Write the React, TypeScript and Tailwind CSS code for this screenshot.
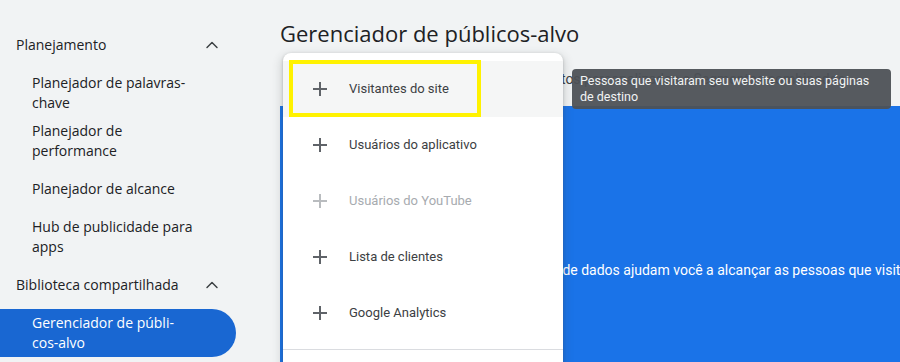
import { ChevronUp } from "lucide-react";

const sans = "font-['Open_Sans',sans-serif]";
const roboto = "font-['Roboto',sans-serif]";

function PlusIcon({ className }: { className?: string }) {
  return (
    <svg width="14" height="14" viewBox="0 0 14 14" className={className}>
      <path d="M7 0v14M0 7h14" stroke="currentColor" strokeWidth="2" fill="none" />
    </svg>
  );
}

function Section({ label }: { label: string }) {
  return (
    <div className="mr-3 flex min-h-12 items-center justify-between py-1 pl-4 pr-[14px] text-[14px] leading-5 text-[#202124]">
      <span>{label}</span>
      <ChevronUp size={20} strokeWidth={1.75} className="text-[#3c4043]" />
    </div>
  );
}

function NavItem({ label, active }: { label: string; active?: boolean }) {
  return (
    <div
      className={
        "mr-3 flex min-h-12 items-center py-1 pl-8 pr-[41px] text-[14px] leading-5 " +
        (active ? "rounded-r-full bg-[#1967d2] text-white" : "text-[#202124]")
      }
    >
      {label}
    </div>
  );
}

const audiences = [
  { label: "Visitantes do site", hover: true },
  { label: "Usuários do aplicativo" },
  { label: "Usuários do YouTube", disabled: true },
  { label: "Lista de clientes" },
  { label: "Google Analytics" },
];

export default function App() {
  return (
    <div className="flex h-[362px] w-[900px] overflow-hidden bg-[#f1f3f4]">
      {/* sidebar */}
      <aside className={`w-[248px] shrink-0 pt-[21px] ${sans}`}>
        <Section label="Planejamento" />
        <NavItem label="Planejador de palavras-chave" />
        <NavItem label="Planejador de performance" />
        <NavItem label="Planejador de alcance" />
        <NavItem label="Hub de publicidade para apps" />
        <Section label="Biblioteca compartilhada" />
        <NavItem label={"Gerenciador de públi\u00ADcos-alvo"} active />
      </aside>

      {/* main */}
      <main className="relative min-w-0 flex-1 pl-8">
        <h1 className={`pt-[19px] text-[22px] leading-7 text-[#202124] ${sans}`}>
          Gerenciador de públicos-alvo
        </h1>

        <div className={`h-[59px] whitespace-nowrap pl-[231px] pt-[22px] text-[14px] leading-5 text-[#3c4043] ${roboto}`}>
          segmentos personalizados e Segmentos combinados
        </div>

        <div className={`h-[300px] bg-[#1a73e8] pl-[189px] pt-[154px] text-[14px] leading-5 whitespace-nowrap text-white ${roboto}`}>
          Os segmentos de dados ajudam você a alcançar as pessoas que visitaram seu site
        </div>

        {/* dropdown menu */}
        <div className="absolute left-[35px] top-[53px] h-[330px] w-[280px] rounded-t-lg bg-white pt-2 shadow-[0_1px_3px_rgba(60,64,67,0.3),0_4px_8px_3px_rgba(60,64,67,0.15)]">
          {audiences.map((a) => (
            <div
              key={a.label}
              className={
                `flex h-14 items-center gap-[22px] pl-[30px] text-[13px] ${roboto} ` +
                (a.hover ? "bg-[#f5f6f6] " : "") +
                (a.disabled ? "text-[#a7abaf]" : "text-[#3c4043]")
              }
            >
              <PlusIcon className={a.disabled ? "text-[#b9bcbf]" : "text-[#5f6368]"} />
              <span>{a.label}</span>
            </div>
          ))}
          <div className="mt-2 border-t border-[#dadce0]" />

          {/* highlight box */}
          <div className="absolute left-[6px] top-[7px] h-[57px] w-[192px] border-4 border-[#fff200]" />
        </div>

        {/* tooltip */}
        <div className={`absolute left-[324px] top-[69px] w-[319px] rounded bg-[#4d5156]/95 py-1 pl-2 pr-3 text-[12.5px] leading-4 text-[#f1f3f4] ${roboto}`}>
          Pessoas que visitaram seu website ou suas páginas de destino
        </div>
      </main>
    </div>
  );
}
